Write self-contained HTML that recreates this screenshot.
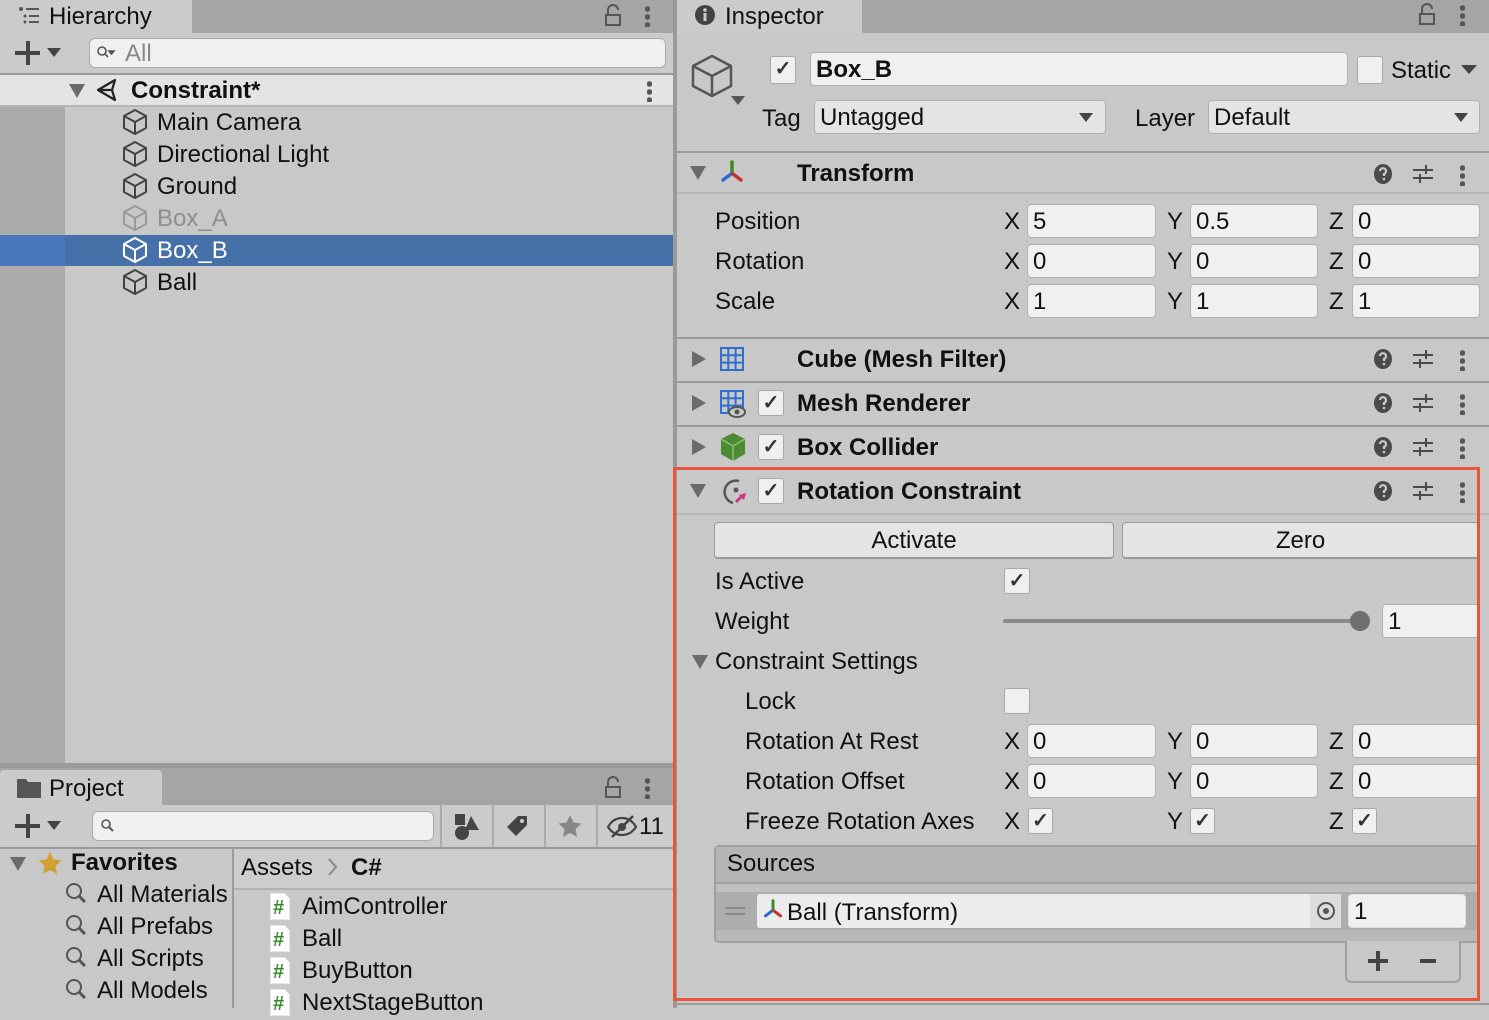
<!DOCTYPE html>
<html><head><meta charset="utf-8">
<style>
*{box-sizing:border-box;margin:0;padding:0}
body{width:1489px;height:1008px;overflow:hidden;background:#c8c8c8;font-family:"Liberation Sans",sans-serif;font-size:24px;color:#111;position:relative}
.a{position:absolute}
.t{position:absolute;height:34px;line-height:34px;white-space:nowrap}
.b{font-weight:bold}
.f{position:absolute;background:#f0f0f0;border:1px solid #b0b0b0;border-radius:4px;height:34px;line-height:33px;padding-left:5px;white-space:nowrap}
.cb{position:absolute;width:26px;height:26px;background:#f0f0f0;border:1px solid #a8a8a8;border-radius:3px;text-align:center;line-height:24px;font-size:20px;color:#333;font-weight:bold}
.ln{position:absolute;height:2px;background:#9a9a9a}
.tri{position:absolute;width:0;height:0;border-left:8px solid transparent;border-right:8px solid transparent;border-top:14px solid #6a6a6a}
.trr{position:absolute;width:0;height:0;border-top:8px solid transparent;border-bottom:8px solid transparent;border-left:14px solid #6a6a6a}
.dots{position:absolute;width:5px;height:22px;background:radial-gradient(circle,#555 2.5px,transparent 3px) 0 0/5px 8px repeat-y}
</style></head><body>

<!-- ============ HIERARCHY ============ -->
<div class="a" style="left:0;top:0;width:673px;height:33px;background:#a5a5a5"></div>
<div class="a" style="left:0;top:0;width:192px;height:33px;background:#cbcbcb"></div>
<svg class="a" style="left:18px;top:6px" width="22" height="20"><g fill="#555"><circle cx="3" cy="3" r="2"/><rect x="8" y="2" width="13" height="2"/><circle cx="7" cy="10" r="1.5"/><rect x="11" y="9" width="10" height="2"/><circle cx="7" cy="16" r="1.5"/><rect x="11" y="15" width="10" height="2"/></g></svg>
<div class="t" style="left:49px;top:0">Hierarchy</div>
<svg class="a" style="left:604px;top:4px" width="18" height="22"><path d="M4 10V6a5 5 0 0 1 10 0" fill="none" stroke="#555" stroke-width="2"/><rect x="2" y="11" width="14" height="10" fill="none" stroke="#555" stroke-width="2"/></svg>
<div class="dots" style="left:645px;top:5px"></div>
<div class="a" style="left:0;top:33px;width:673px;height:40px;background:#cbcbcb"></div>
<div class="a" style="left:15px;top:51px;width:25px;height:4px;background:#444"></div>
<div class="a" style="left:26px;top:41px;width:4px;height:24px;background:#444"></div>
<div class="tri" style="left:47px;top:48px;border-width:9px 7px 0 7px;border-top-color:#444"></div>
<div class="a" style="left:89px;top:38px;width:577px;height:30px;background:#f0f0f0;border:1px solid #aaa;border-radius:6px"></div>
<svg class="a" style="left:96px;top:44px" width="20" height="18"><circle cx="6" cy="7" r="4" fill="none" stroke="#555" stroke-width="1.6"/><path d="M9 10l3 3M13 7h5l-2.5 3z" stroke="#555" fill="#555" stroke-width="1.6"/></svg>
<div class="t" style="left:125px;top:37px;color:#888">All</div>
<div class="ln" style="left:0;top:73px;width:673px"></div>
<div class="a" style="left:0;top:75px;width:673px;height:30px;background:#e4e4e4"></div>
<div class="tri" style="left:69px;top:84px"></div>
<svg class="a" style="left:95px;top:77px" width="26" height="26"><path d="M3 13L20 3l-3 10 3 10z M3 13h14" fill="none" stroke="#222" stroke-width="2.2" stroke-linejoin="round"/></svg>
<div class="t b" style="left:131px;top:74px">Constraint*</div>
<div class="dots" style="left:647px;top:80px"></div>
<div class="ln" style="left:0;top:105px;width:673px;background:#b5b5b5"></div>
<div class="a" style="left:0;top:107px;width:65px;height:656px;background:#ababab"></div>
<div class="a" style="left:0;top:235px;width:65px;height:31px;background:#4a76ba"></div>
<div class="a" style="left:65px;top:235px;width:608px;height:31px;background:#4570a8"></div>

<svg width="0" height="0" style="position:absolute"><defs><g id="cube"><path d="M13 2L24 8v12L13 26 2 20V8z M2 8l11 6 11-6 M13 14v12" fill="none" stroke-width="2" stroke-linejoin="round"/></g></defs></svg>
<svg class="a" style="left:122px;top:108px" width="27" height="28"><use href="#cube" stroke="#444"/></svg>
<div class="t" style="left:157px;top:106px">Main Camera</div>
<svg class="a" style="left:122px;top:140px" width="27" height="28"><use href="#cube" stroke="#444"/></svg>
<div class="t" style="left:157px;top:138px">Directional Light</div>
<svg class="a" style="left:122px;top:172px" width="27" height="28"><use href="#cube" stroke="#444"/></svg>
<div class="t" style="left:157px;top:170px">Ground</div>
<svg class="a" style="left:122px;top:204px" width="27" height="28"><use href="#cube" stroke="#999"/></svg>
<div class="t" style="left:157px;top:202px;color:#8e8e8e">Box_A</div>
<svg class="a" style="left:122px;top:236px" width="27" height="28"><use href="#cube" stroke="#fff"/></svg>
<div class="t" style="left:157px;top:234px;color:#fff">Box_B</div>
<svg class="a" style="left:122px;top:268px" width="27" height="28"><use href="#cube" stroke="#444"/></svg>
<div class="t" style="left:157px;top:266px">Ball</div>

<div class="a" style="left:0;top:763px;width:673px;height:5px;background:#9a9a9a"></div>
<div class="a" style="left:673px;top:0;width:4px;height:1008px;background:#9a9a9a"></div>

<!-- ============ PROJECT ============ -->
<div class="a" style="left:0;top:768px;width:673px;height:37px;background:#a5a5a5"></div>
<div class="a" style="left:0;top:770px;width:162px;height:35px;background:#cbcbcb;border-radius:4px 4px 0 0"></div>
<svg class="a" style="left:17px;top:778px" width="24" height="20"><path d="M0 1h9l2 3h13v16H0z" fill="#555"/></svg>
<div class="t" style="left:49px;top:772px">Project</div>
<svg class="a" style="left:604px;top:776px" width="18" height="22"><path d="M4 10V6a5 5 0 0 1 10 0" fill="none" stroke="#555" stroke-width="2"/><rect x="2" y="11" width="14" height="10" fill="none" stroke="#555" stroke-width="2"/></svg>
<div class="dots" style="left:645px;top:777px"></div>
<div class="a" style="left:0;top:805px;width:673px;height:42px;background:#cbcbcb"></div>
<div class="a" style="left:15px;top:824px;width:25px;height:4px;background:#444"></div>
<div class="a" style="left:26px;top:814px;width:4px;height:24px;background:#444"></div>
<div class="tri" style="left:47px;top:821px;border-width:9px 7px 0 7px;border-top-color:#444"></div>
<div class="a" style="left:92px;top:811px;width:342px;height:30px;background:#f0f0f0;border:1px solid #aaa;border-radius:6px"></div>
<svg class="a" style="left:100px;top:818px" width="16" height="16"><circle cx="6" cy="6" r="4" fill="none" stroke="#555" stroke-width="1.6"/><path d="M9 9l4 4" stroke="#555" stroke-width="2"/></svg>
<div class="a" style="left:440px;top:805px;width:2px;height:42px;background:#aaa"></div>
<div class="a" style="left:492px;top:805px;width:2px;height:42px;background:#aaa"></div>
<div class="a" style="left:544px;top:805px;width:2px;height:42px;background:#aaa"></div>
<div class="a" style="left:596px;top:805px;width:2px;height:42px;background:#aaa"></div>
<svg class="a" style="left:454px;top:813px" width="26" height="28"><rect x="1" y="1" width="10" height="11" fill="#444"/><circle cx="8" cy="20" r="7" fill="#444"/><path d="M17 3l8 14H11z" fill="#444"/></svg>
<svg class="a" style="left:505px;top:815px" width="24" height="24"><path d="M13 1h9v9L11 21 2 12z" fill="#444"/><circle cx="17" cy="6" r="2" fill="#cbcbcb"/></svg>
<svg class="a" style="left:557px;top:814px" width="26" height="24"><path d="M13 1l3.5 7.5 8 1-6 5.5 1.6 8L13 19l-7 4 1.5-8-6-5.5 8-1z" fill="#888"/></svg>
<svg class="a" style="left:606px;top:814px" width="32" height="24"><path d="M2 13c4-7 9-9 14-9s10 2 14 9c-4 6-9 8-14 8S6 19 2 13z" fill="none" stroke="#444" stroke-width="2.2"/><circle cx="16" cy="13" r="4" fill="#444"/><path d="M6 23L27 2" stroke="#444" stroke-width="2.5"/></svg>
<div class="t" style="left:639px;top:810px">11</div>
<div class="ln" style="left:0;top:847px;width:673px"></div>
<div class="tri" style="left:10px;top:857px"></div>
<svg class="a" style="left:37px;top:851px" width="26" height="24"><path d="M13 1l3.5 7.5 8 1-6 5.5 1.6 8L13 19l-7 4 1.5-8-6-5.5 8-1z" fill="#d0a030"/></svg>
<div class="t b" style="left:71px;top:846px">Favorites</div>
<svg width="0" height="0" style="position:absolute"><defs><g id="mag"><circle cx="9" cy="9" r="7" fill="none" stroke="#555" stroke-width="2"/><path d="M14 14l6 6" stroke="#555" stroke-width="3"/></g></defs></svg>
<svg class="a" style="left:65px;top:882px" width="24" height="24"><use href="#mag"/></svg>
<div class="t" style="left:97px;top:878px;width:134px;overflow:hidden">All Materials</div>
<svg class="a" style="left:65px;top:914px" width="24" height="24"><use href="#mag"/></svg>
<div class="t" style="left:97px;top:910px">All Prefabs</div>
<svg class="a" style="left:65px;top:946px" width="24" height="24"><use href="#mag"/></svg>
<div class="t" style="left:97px;top:942px">All Scripts</div>
<svg class="a" style="left:65px;top:978px" width="24" height="24"><use href="#mag"/></svg>
<div class="t" style="left:97px;top:974px">All Models</div>
<div class="a" style="left:232px;top:849px;width:2px;height:159px;background:#9a9a9a"></div>
<div class="a" style="left:234px;top:849px;width:439px;height:39px;background:#cdcdcd"></div>
<div class="t" style="left:241px;top:851px">Assets</div>
<svg class="a" style="left:327px;top:857px" width="12" height="20"><path d="M2 2l7 8-7 8" fill="none" stroke="#888" stroke-width="2"/></svg>
<div class="t b" style="left:351px;top:851px">C#</div>
<div class="ln" style="left:234px;top:888px;width:439px;background:#b0b0b0"></div>
<svg width="0" height="0" style="position:absolute"><defs><g id="cs"><path d="M1 1h15l5 5v22H1z" fill="#fff" stroke="#ccc"/><text x="4" y="22" font-family="Liberation Sans" font-size="20" font-weight="bold" fill="#3b8a2e">#</text></g></defs></svg>
<svg class="a" style="left:269px;top:892px" width="24" height="30"><use href="#cs"/></svg>
<div class="t" style="left:302px;top:890px">AimController</div>
<svg class="a" style="left:269px;top:924px" width="24" height="30"><use href="#cs"/></svg>
<div class="t" style="left:302px;top:922px">Ball</div>
<svg class="a" style="left:269px;top:956px" width="24" height="30"><use href="#cs"/></svg>
<div class="t" style="left:302px;top:954px">BuyButton</div>
<svg class="a" style="left:269px;top:988px" width="24" height="30"><use href="#cs"/></svg>
<div class="t" style="left:302px;top:986px">NextStageButton</div>

<!-- ============ INSPECTOR ============ -->
<div class="a" style="left:677px;top:0;width:812px;height:33px;background:#a5a5a5"></div>
<div class="a" style="left:677px;top:0;width:185px;height:33px;background:#cbcbcb"></div>
<svg class="a" style="left:694px;top:4px" width="22" height="22"><circle cx="11" cy="11" r="10" fill="#444"/><rect x="9.5" y="9" width="3" height="8" fill="#cbcbcb"/><circle cx="11" cy="6" r="1.8" fill="#cbcbcb"/></svg>
<div class="t" style="left:725px;top:0">Inspector</div>
<svg class="a" style="left:1418px;top:3px" width="18" height="22"><path d="M4 10V6a5 5 0 0 1 10 0" fill="none" stroke="#555" stroke-width="2"/><rect x="2" y="11" width="14" height="10" fill="none" stroke="#555" stroke-width="2"/></svg>
<div class="dots" style="left:1460px;top:4px"></div>

<svg class="a" style="left:691px;top:54px" width="44" height="44"><path d="M21 2L40 12v20L21 42 2 32V12z M2 12l19 10 19-10 M21 22v20" fill="none" stroke="#555" stroke-width="2.5" stroke-linejoin="round"/></svg>
<div class="tri" style="left:731px;top:96px;border-width:9px 7px 0 7px;border-top-color:#555"></div>
<div class="cb" style="left:770px;top:56px;height:28px">✓</div>
<div class="f b" style="left:810px;top:52px;width:538px">Box_B</div>
<div class="cb" style="left:1357px;top:56px;height:28px"></div>
<div class="t" style="left:1391px;top:54px">Static</div>
<div class="tri" style="left:1461px;top:65px;border-width:9px 8px 0 8px;border-top-color:#444"></div>
<div class="t" style="left:762px;top:102px">Tag</div>
<div class="f" style="left:814px;top:100px;width:292px;background:#e4e4e4">Untagged</div>
<div class="tri" style="left:1079px;top:113px;border-width:9px 7px 0 7px;border-top-color:#444"></div>
<div class="t" style="left:1135px;top:102px">Layer</div>
<div class="f" style="left:1208px;top:100px;width:272px;background:#e4e4e4">Default</div>
<div class="tri" style="left:1454px;top:113px;border-width:9px 7px 0 7px;border-top-color:#444"></div>
<div class="ln" style="left:677px;top:151px;width:812px"></div>

<svg width="0" height="0" style="position:absolute"><defs>
<g id="help"><ellipse cx="10" cy="11" rx="9" ry="10" fill="#4a4a4a"/><path d="M7 8a3 3 0 1 1 4 3v2" fill="none" stroke="#cbcbcb" stroke-width="2.2"/><circle cx="11" cy="16" r="1.3" fill="#cbcbcb"/></g>
<g id="sl" fill="#4a4a4a"><rect x="1" y="6" width="20" height="2"/><rect x="1" y="14" width="20" height="2"/><rect x="13" y="2" width="2" height="9"/><rect x="7" y="11" width="2" height="9"/></g>
<g id="axis"><path d="M13 2v11" stroke="#3a8a2a" stroke-width="3.5" stroke-linecap="round"/><path d="M12 14l-8 6" stroke="#2a6ad0" stroke-width="3.5" stroke-linecap="round"/><path d="M14 14l8 6" stroke="#c83030" stroke-width="3.5" stroke-linecap="round"/></g>
</defs></svg>

<div class="tri" style="left:690px;top:166px"></div>
<svg class="a" style="left:719px;top:160px" width="28" height="26"><use href="#axis"/></svg>
<div class="t b" style="left:797px;top:157px">Transform</div>
<svg class="a" style="left:1373px;top:163px" width="22" height="22"><use href="#help"/></svg>
<svg class="a" style="left:1412px;top:163px" width="22" height="22"><use href="#sl"/></svg>
<div class="dots" style="left:1460px;top:164px"></div>
<div class="ln" style="left:677px;top:192px;width:812px;background:#b8b8b8"></div>

<div class="t" style="left:715px;top:205px">Position</div>
<div class="t" style="left:1004px;top:205px">X</div><div class="f" style="left:1027px;top:204px;width:129px">5</div>
<div class="t" style="left:1167px;top:205px">Y</div><div class="f" style="left:1190px;top:204px;width:128px">0.5</div>
<div class="t" style="left:1329px;top:205px">Z</div><div class="f" style="left:1352px;top:204px;width:128px">0</div>
<div class="t" style="left:715px;top:245px">Rotation</div>
<div class="t" style="left:1004px;top:245px">X</div><div class="f" style="left:1027px;top:244px;width:129px">0</div>
<div class="t" style="left:1167px;top:245px">Y</div><div class="f" style="left:1190px;top:244px;width:128px">0</div>
<div class="t" style="left:1329px;top:245px">Z</div><div class="f" style="left:1352px;top:244px;width:128px">0</div>
<div class="t" style="left:715px;top:285px">Scale</div>
<div class="t" style="left:1004px;top:285px">X</div><div class="f" style="left:1027px;top:284px;width:129px">1</div>
<div class="t" style="left:1167px;top:285px">Y</div><div class="f" style="left:1190px;top:284px;width:128px">1</div>
<div class="t" style="left:1329px;top:285px">Z</div><div class="f" style="left:1352px;top:284px;width:128px">1</div>
<div class="ln" style="left:677px;top:337px;width:812px"></div>

<div class="trr" style="left:692px;top:351px"></div>
<svg class="a" style="left:719px;top:346px" width="26" height="26"><path d="M2 2h22v22H2z M9.3 2v22 M16.6 2v22 M2 9.3h22 M2 16.6h22" fill="none" stroke="#2f6fd0" stroke-width="2"/></svg>
<div class="t b" style="left:797px;top:343px">Cube (Mesh Filter)</div>
<svg class="a" style="left:1373px;top:348px" width="22" height="22"><use href="#help"/></svg>
<svg class="a" style="left:1412px;top:348px" width="22" height="22"><use href="#sl"/></svg>
<div class="dots" style="left:1460px;top:349px"></div>
<div class="ln" style="left:677px;top:381px;width:812px"></div>
<div class="trr" style="left:692px;top:395px"></div>
<svg class="a" style="left:719px;top:389px" width="28" height="30"><path d="M2 2h22v22H2z M9.3 2v22 M16.6 2v22 M2 9.3h22 M2 16.6h22" fill="none" stroke="#2f6fd0" stroke-width="2"/><ellipse cx="18" cy="23" rx="8" ry="5" fill="#cbcbcb" stroke="#555" stroke-width="2"/><circle cx="18" cy="23" r="2.5" fill="#555"/></svg>
<div class="cb" style="left:758px;top:390px">✓</div>
<div class="t b" style="left:797px;top:387px">Mesh Renderer</div>
<svg class="a" style="left:1373px;top:392px" width="22" height="22"><use href="#help"/></svg>
<svg class="a" style="left:1412px;top:392px" width="22" height="22"><use href="#sl"/></svg>
<div class="dots" style="left:1460px;top:393px"></div>
<div class="ln" style="left:677px;top:425px;width:812px"></div>
<div class="trr" style="left:692px;top:439px"></div>
<svg class="a" style="left:719px;top:432px" width="28" height="30"><path d="M14 1L26 7v15L14 29 2 22V7z" fill="#4c8a34"/><path d="M2 7l12 7 12-7 M14 14v15" stroke="#8cc070" stroke-width="1.5" fill="none"/></svg>
<div class="cb" style="left:758px;top:434px">✓</div>
<div class="t b" style="left:797px;top:431px">Box Collider</div>
<svg class="a" style="left:1373px;top:436px" width="22" height="22"><use href="#help"/></svg>
<svg class="a" style="left:1412px;top:436px" width="22" height="22"><use href="#sl"/></svg>
<div class="dots" style="left:1460px;top:437px"></div>

<div class="tri" style="left:690px;top:484px"></div>
<svg class="a" style="left:719px;top:477px" width="30" height="30"><path d="M20 4A11 11 0 1 0 14 26" fill="none" stroke="#555" stroke-width="2.5"/><circle cx="17" cy="13" r="2.5" fill="#555"/><path d="M20 18l7-2-2 7-2-2-5 5-2-2 5-5z" fill="#d03080"/></svg>
<div class="cb" style="left:758px;top:478px">✓</div>
<div class="t b" style="left:797px;top:475px">Rotation Constraint</div>
<svg class="a" style="left:1373px;top:480px" width="22" height="22"><use href="#help"/></svg>
<svg class="a" style="left:1412px;top:480px" width="22" height="22"><use href="#sl"/></svg>
<div class="dots" style="left:1460px;top:481px"></div>
<div class="ln" style="left:677px;top:513px;width:812px;background:#b8b8b8"></div>

<div class="a" style="left:714px;top:522px;width:400px;height:37px;background:#e4e4e4;border:1px solid #999;border-bottom:2px solid #999;border-radius:4px;text-align:center;line-height:36px">Activate</div>
<div class="a" style="left:1122px;top:522px;width:360px;height:37px;background:#e4e4e4;border:1px solid #999;border-bottom:2px solid #999;border-radius:4px;text-align:center;line-height:36px;padding-right:3px">Zero</div>

<div class="t" style="left:715px;top:565px">Is Active</div>
<div class="cb" style="left:1004px;top:568px">✓</div>
<div class="t" style="left:715px;top:605px">Weight</div>
<div class="a" style="left:1003px;top:619px;width:357px;height:4px;background:#8a8a8a;border-radius:2px"></div>
<div class="a" style="left:1350px;top:611px;width:20px;height:20px;background:#6e6e6e;border-radius:50%"></div>
<div class="f" style="left:1382px;top:604px;width:110px">1</div>
<div class="tri" style="left:692px;top:655px"></div>
<div class="t" style="left:715px;top:645px">Constraint Settings</div>
<div class="t" style="left:745px;top:685px">Lock</div>
<div class="cb" style="left:1004px;top:688px"></div>
<div class="t" style="left:745px;top:725px">Rotation At Rest</div>
<div class="t" style="left:1004px;top:725px">X</div><div class="f" style="left:1027px;top:724px;width:129px">0</div>
<div class="t" style="left:1167px;top:725px">Y</div><div class="f" style="left:1190px;top:724px;width:128px">0</div>
<div class="t" style="left:1329px;top:725px">Z</div><div class="f" style="left:1352px;top:724px;width:140px">0</div>
<div class="t" style="left:745px;top:765px">Rotation Offset</div>
<div class="t" style="left:1004px;top:765px">X</div><div class="f" style="left:1027px;top:764px;width:129px">0</div>
<div class="t" style="left:1167px;top:765px">Y</div><div class="f" style="left:1190px;top:764px;width:128px">0</div>
<div class="t" style="left:1329px;top:765px">Z</div><div class="f" style="left:1352px;top:764px;width:140px">0</div>
<div class="t" style="left:745px;top:805px">Freeze Rotation Axes</div>
<div class="t" style="left:1004px;top:805px">X</div><div class="cb" style="left:1028px;top:808px;width:25px">✓</div>
<div class="t" style="left:1167px;top:805px">Y</div><div class="cb" style="left:1190px;top:808px;width:25px">✓</div>
<div class="t" style="left:1329px;top:805px">Z</div><div class="cb" style="left:1352px;top:808px;width:25px">✓</div>

<div class="a" style="left:714px;top:845px;width:775px;height:98px;background:#b9b9b9;border:2px solid #a0a0a0;border-radius:5px"></div>
<div class="a" style="left:716px;top:847px;width:773px;height:35px;background:#b5b5b5"></div>
<div class="t" style="left:727px;top:847px">Sources</div>
<div class="a" style="left:716px;top:882px;width:773px;height:2px;background:#a0a0a0"></div>
<div class="a" style="left:716px;top:884px;width:773px;height:8px;background:#c0c0c0"></div>
<div class="a" style="left:716px;top:892px;width:773px;height:38px;background:#adadad"></div>
<div class="a" style="left:725px;top:907px;width:20px;height:2px;background:#888"></div>
<div class="a" style="left:725px;top:913px;width:20px;height:2px;background:#888"></div>
<div class="a" style="left:757px;top:894px;width:584px;height:34px;background:#ececec;border-radius:3px"></div>
<div class="a" style="left:1310px;top:894px;width:31px;height:34px;background:#dcdcdc"></div>
<svg class="a" style="left:1316px;top:901px" width="20" height="20"><circle cx="10" cy="10" r="8" fill="none" stroke="#555" stroke-width="2"/><circle cx="10" cy="10" r="3" fill="#555"/></svg>
<svg class="a" style="left:762px;top:899px" width="22" height="22" viewBox="0 0 26 26"><use href="#axis"/></svg>
<div class="t" style="left:787px;top:896px">Ball (Transform)</div>
<div class="f" style="left:1348px;top:894px;width:118px;border-color:#e0e0e0">1</div>
<div class="a" style="left:1345px;top:941px;width:116px;height:42px;background:#c8c8c8;border:2px solid #a0a0a0;border-top:none;border-radius:0 0 6px 6px"></div>
<div class="a" style="left:1368px;top:959px;width:20px;height:4px;background:#444"></div>
<div class="a" style="left:1376px;top:951px;width:4px;height:20px;background:#444"></div>
<div class="a" style="left:1420px;top:959px;width:16px;height:4px;background:#444"></div>

<div class="a" style="left:1480px;top:518px;width:9px;height:485px;background:#c8c8c8"></div>
<div class="ln" style="left:677px;top:1003px;width:812px"></div>
<div class="a" style="left:673px;top:467px;width:807px;height:534px;border:3px solid #e8553a"></div>
</body></html>
